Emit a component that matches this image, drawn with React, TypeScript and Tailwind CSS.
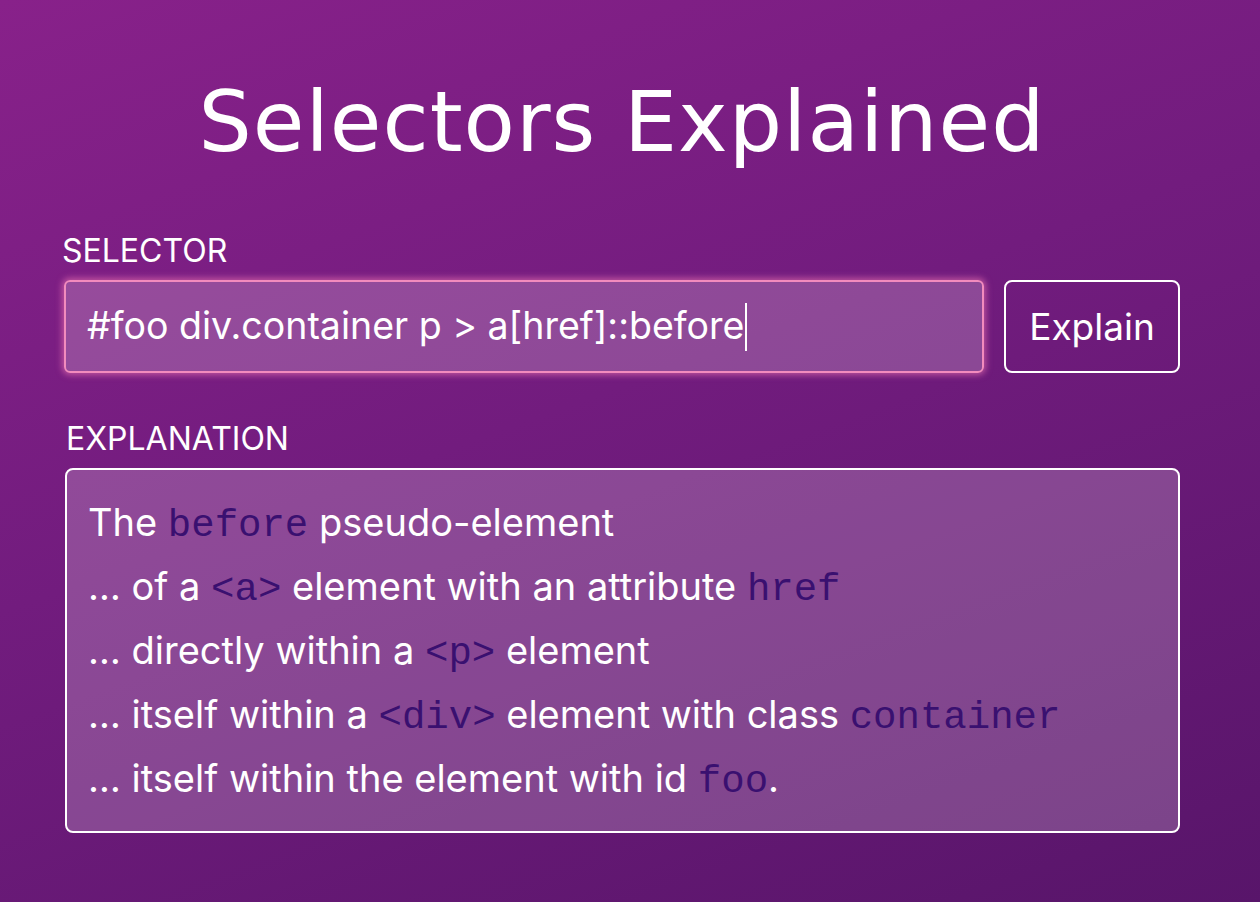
import React from "react";

const lines: { parts: { t: string; code?: boolean }[] }[] = [
  { parts: [{ t: "The " }, { t: "before", code: true }, { t: " pseudo-element" }] },
  {
    parts: [
      { t: "… of a " },
      { t: "<a>", code: true },
      { t: " element with an attribute " },
      { t: "href", code: true },
    ],
  },
  { parts: [{ t: "… directly within a " }, { t: "<p>", code: true }, { t: " element" }] },
  {
    parts: [
      { t: "… itself within a " },
      { t: "<div>", code: true },
      { t: " element with class " },
      { t: "container", code: true },
    ],
  },
  { parts: [{ t: "… itself within the element with id " }, { t: "foo", code: true }, { t: "." }] },
];

export default function App() {
  return (
    <div className="min-h-[902px] w-full bg-[linear-gradient(160deg,#88218a_0%,#721c7e_45%,#58156a_100%)] font-['Inter','Noto_Sans',sans-serif] text-white">
      <div className="ml-[64px] w-[1116px] pt-[68px]">
        <h1 className="text-center font-['DejaVu_Sans',sans-serif] text-[84px] leading-[108px] tracking-[1px]">
          Selectors Explained
        </h1>

        <label className="-ml-[2px] mt-[56px] block text-[32px] leading-[38px]">SELECTOR</label>
        <div className="mt-[10px] flex gap-[20px]">
          <div className="flex h-[93px] flex-1 items-center rounded-[6px] border-2 border-[#f28bbd] bg-white/20 pl-[21px] shadow-[0_0_6px_2px_rgba(242,120,180,0.6)]">
            <span className="text-[37.5px]">#foo div.container p &gt; a[href]::before</span>
            <span className="ml-[1px] h-[48px] w-[2px] bg-white" />
          </div>
          <button className="h-[93px] w-[176px] rounded-[8px] border-2 border-white text-[37px]">
            Explain
          </button>
        </div>

        <label className="mt-[47px] block pl-[2px] text-[32px] leading-[38px]">EXPLANATION</label>
        <div className="ml-[1px] mt-[10px] rounded-[8px] border-2 border-white bg-white/20 px-[21px] pb-[21px] pt-[20px]">
          {lines.map((line, i) => (
            <div key={i} className="text-[38px] leading-[64px]">
              {line.parts.map((p, j) =>
                p.code ? (
                  <code key={j} className="font-['Liberation_Mono',monospace] text-[39px] leading-none text-[#3a1070]">
                    {p.t}
                  </code>
                ) : (
                  <span key={j}>{p.t}</span>
                )
              )}
            </div>
          ))}
        </div>
      </div>
    </div>
  );
}
